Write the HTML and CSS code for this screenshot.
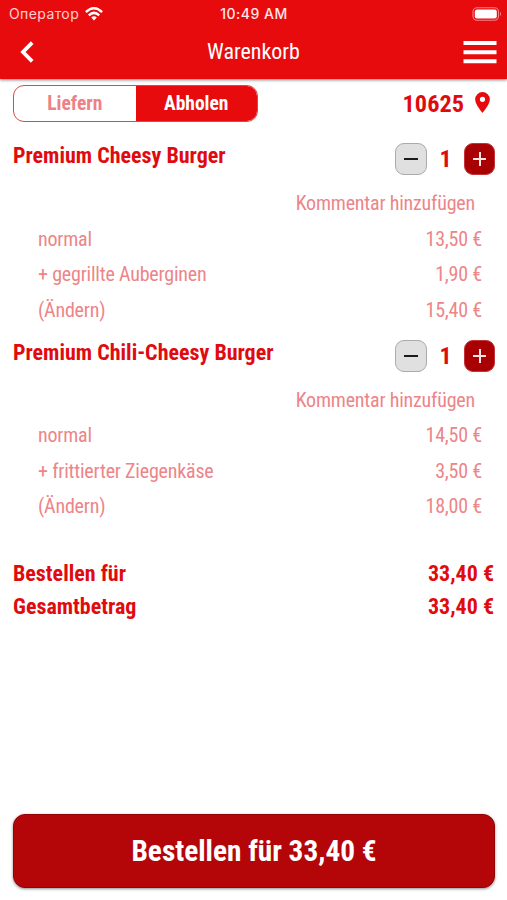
FILE: index.html
```html
<!DOCTYPE html>
<html lang="de">
<head>
<meta charset="utf-8">
<title>Warenkorb</title>
<link rel="stylesheet" href="styles.css">
</head>
<body>
<div class="app">
  <header class="header">
    <div class="status">
      <div class="carrier"><span>Оператор</span>
        <svg class="wifi" viewBox="0 0 18 14" width="18" height="14" fill="none" stroke="#fff" stroke-width="2.5"><path d="M.9 5.100Q9-2.500 17.100 5.100M3.800 8.300q5.200-4.800 10.400 0"/><path d="M6.200 10.600q2.800-2.500 5.600 0L9 13.500z" fill="#fff" stroke="none"/></svg>
      </div>
      <span class="clock">10:49 AM</span>
      <svg class="battery" viewBox="0 0 30 14" width="30" height="14"><rect x="1" y=".8" width="25.5" height="12.4" rx="4" fill="none" stroke="#f58285" stroke-width="1.1"/><rect x="2.8" y="2.6" width="22" height="8.8" rx="2.2" fill="#fff"/><path d="M28 4.800q2.200 2.200 0 4.400z" fill="#f58285"/></svg>
    </div>
    <nav class="nav">
      <svg class="back" viewBox="0 0 14 22" width="14" height="22" fill="none" stroke="#fff" stroke-width="3.8"><path d="M12.200 1.700 3 11l9.200 9.300"/></svg>
      <h1 class="page-title">Warenkorb</h1>
      <svg class="menu" viewBox="0 0 34 24" width="34" height="24" fill="#fff"><path d="M.5 1h33v4H.5zM.5 10.200h33v4H.5zM.5 19.200h33v4H.5z"/></svg>
    </nav>
  </header>
  <main class="cart">
    <div class="delivery">
      <div class="toggle"><span class="option">Liefern</span><span class="option active">Abholen</span></div>
      <div class="place"><span class="zip">10625</span>
        <svg viewBox="0 0 14 20" width="15" height="21"><path fill="#e70b0e" fill-rule="evenodd" d="M7 0a7 7 0 0 0-7 7c0 5.200 7 13 7 13s7-7.800 7-13a7 7 0 0 0-7-7zm0 4.500a2.500 2.500 0 1 1 0 5 2.500 2.500 0 0 1 0-5z"/></svg>
      </div>
    </div>
    <section class="item">
      <div class="item-head"><h2 class="name">Premium Cheesy Burger</h2>
        <div class="stepper"><span class="step minus"></span><span class="count">1</span><span class="step plus"></span></div></div>
      <div class="comment"><span>Kommentar hinzufügen</span></div>
      <div class="line"><span>normal</span><span>13,50 €</span></div>
      <div class="line"><span>+ gegrillte Auberginen</span><span>1,90 €</span></div>
      <div class="line"><span>(Ändern)</span><span>15,40 €</span></div>
    </section>
    <section class="item">
      <div class="item-head"><h2 class="name">Premium Chili-Cheesy Burger</h2>
        <div class="stepper"><span class="step minus"></span><span class="count">1</span><span class="step plus"></span></div></div>
      <div class="comment"><span>Kommentar hinzufügen</span></div>
      <div class="line"><span>normal</span><span>14,50 €</span></div>
      <div class="line"><span>+ frittierter Ziegenkäse</span><span>3,50 €</span></div>
      <div class="line"><span>(Ändern)</span><span>18,00 €</span></div>
    </section>
    <div class="totals">
      <div class="total"><span>Bestellen für</span><span>33,40 €</span></div>
      <div class="total"><span>Gesamtbetrag</span><span>33,40 €</span></div>
    </div>
  </main>
  <div class="footer"><button class="order">Bestellen für 33,40 €</button></div>
</div>
</body>
</html>
```
FILE: styles.css
```css
* { box-sizing: border-box; }
body { margin: 0; background: #fff; font-family: "Roboto Condensed", Roboto, sans-serif; font-stretch: 75%; color: #e00b0e; }
h1, h2 { margin: 0; }
svg { display: block; }
.app { height: 900px; display: flex; flex-direction: column; overflow: hidden; }
.header { height: 79px; flex: none; background: #e80b0e; color: #fff; box-shadow: 0 1px 3px rgba(0,0,0,.5); }
.status { height: 27px; display: grid; grid-template-columns: 1fr auto 1fr; align-items: center; padding: 0 8px 0 9px; font-family: Inter, sans-serif; font-stretch: 100%; font-size: 14px; }
.carrier { display: flex; align-items: center; gap: 6px; color: #ffd0d0; letter-spacing: .4px; }
.clock { font-weight: 500; letter-spacing: .5px; color: #ffe8e8; }
.battery { justify-self: end; margin-right: -3px; }
.nav { height: 49px; display: grid; grid-template-columns: 187px auto 1fr; align-items: center; padding: 0 10px 0 20px; }
.page-title { font-size: 22px; font-weight: 400; }
.menu { justify-self: end; }
.cart { flex: 1; padding: 6px 12px 0 13px; }
.delivery { height: 37px; display: flex; justify-content: space-between; align-items: center; }
.toggle { display: flex; width: 245px; height: 37px; border: 1px solid #e0474a; border-radius: 11px; overflow: hidden; }
.option { flex: 1; display: flex; align-items: center; justify-content: center; font-size: 19.5px; font-weight: 700; color: #ed8184; }
.option.active { background: #e80b0e; color: #fff; }
.place { display: flex; align-items: center; gap: 11px; padding-right: 5px; }
.zip { font-size: 24.3px; font-weight: 700; }
.place svg { margin-top: -2px; }
.item { height: 196.7px; padding-top: 21px; }
.item-head { display: flex; justify-content: space-between; height: 43px; }
.name { font-size: 22px; line-height: 26px; font-weight: 700; }
.stepper { display: flex; align-items: center; height: 32px; }
.step { width: 32px; height: 32px; border-radius: 9px; position: relative; }
.step.plus { width: 31px; background: #a90003; border: 1px solid #c23437; }
.step.minus { background: #e0e0e0; border: 1px solid #aaa; }
.step::before, .step.plus::after { content: ""; position: absolute; inset: 0; margin: auto; background: #1b1b1b; width: 14px; height: 2px; }
.step.plus::before, .step.plus::after { background: #ffe5e5; }
.step.plus::before { width: 13px; }
.step.plus::after { width: 2px; height: 14px; }
.count { width: 37px; text-align: center; font-size: 24px; font-weight: 700; }
.comment, .line { height: 35.5px; line-height: 35.5px; display: flex; font-size: 20px; letter-spacing: -.2px; color: #ed8588; }
.comment { justify-content: flex-end; padding-right: 20px; }
.line { justify-content: space-between; padding: 0 13px 0 25px; }
.totals { padding-top: 42px; }
.total { display: flex; justify-content: space-between; height: 33px; line-height: 33px; font-size: 22px; font-weight: 700; padding-right: 1px; }
.footer { padding: 0 12px 12px 13px; }
.order { display: block; width: 100%; height: 74px; padding: 0; border: 1px solid #930306; border-radius: 12px; background: #b40609; color: #fff; font-family: inherit; font-stretch: 75%; font-size: 29.3px; font-weight: 700; box-shadow: 0 1px 3px rgba(0,0,0,.45); }
```
